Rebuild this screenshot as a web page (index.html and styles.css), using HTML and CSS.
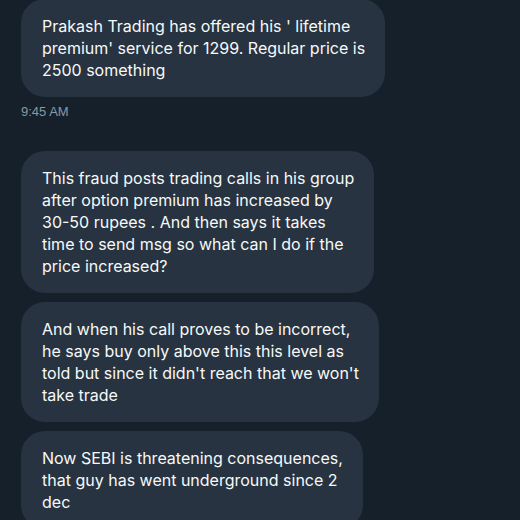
FILE: index.html
```html
<!DOCTYPE html>
<html lang="en">
<head>
    <meta charset="UTF-8">
    <title>Messages</title>
    <link rel="stylesheet" href="styles.css">
</head>
<body>
    <!-- conversation -->
    <div class="thread">
        <div class="group">
            <div class="bubble">Prakash Trading has offered his ' lifetime<br>premium' service for 1299. Regular price is<br>2500 something</div>
            <div class="time">9:45 AM</div>
        </div>

        <div class="group">
            <div class="bubble">This fraud posts trading calls in his group<br>after option premium has increased by<br>30-50 rupees . And then says it takes<br>time to send msg so what can I do if the<br>price increased?</div>
            <div class="bubble">And when his call proves to be incorrect,<br>he says buy only above this this level as<br>told but since it didn't reach that we won't<br>take trade</div>
            <div class="bubble">Now SEBI is threatening consequences,<br>that guy has went underground since 2<br>dec</div>
        </div>
    </div>
</body>
</html>
```
FILE: styles.css
```css
body {
    margin: 0;
    padding: 0;
    background-color: #15202b;
    color: #f7f9f9;
    font-family: Inter, "Noto Sans", sans-serif;
    overflow: hidden;
}

.thread {
    display: flex;
    flex-direction: column;
    gap: 32px;
    padding: 0 21px;
    margin-top: -1px;
}

.group {
    display: flex;
    flex-direction: column;
    align-items: flex-start;
    gap: 9px;
}

.bubble {
    background-color: #273340;
    border-radius: 24px;
    padding: 16px 20px 16px 21px;
    font-size: 16px;
    line-height: 22px;
    width: fit-content;
}

.time {
    color: #8b98a5;
    font-family: "Liberation Sans", Arial, sans-serif;
    font-size: 13px;
    margin-top: -2px;
}
```
